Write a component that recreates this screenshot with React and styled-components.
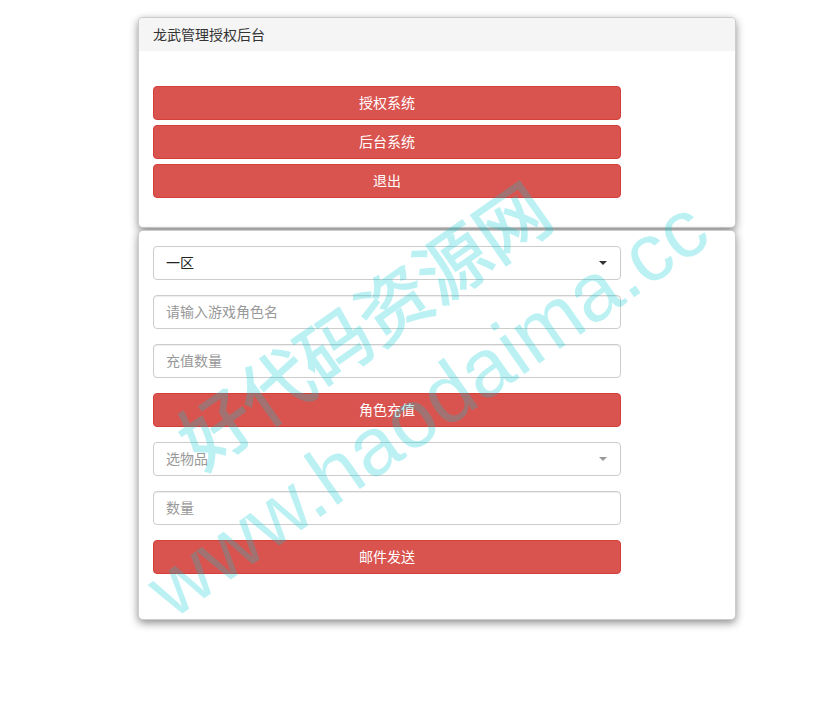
import React from 'react';
import styled, { createGlobalStyle } from 'styled-components';

const GlobalStyle = createGlobalStyle`
  html, body {
    margin: 0;
    padding: 0;
    background: #fff;
  }
  body {
    font-family: "Noto Sans CJK SC", "Liberation Sans", sans-serif;
    font-size: 14px;
    color: #333;
  }
  * {
    box-sizing: border-box;
  }
`;

const App = () => {
  return (
    <Page>
      <GlobalStyle />
      <Column>
        <Card>
          <CardHeader>龙武管理授权后台</CardHeader>
          <MenuBody>
            <Button>授权系统</Button>
            <Button>后台系统</Button>
            <Button>退出</Button>
          </MenuBody>
        </Card>

        <Card>
          <FormBody>
            <SelectWrap>
              <Select defaultValue="1">
                <option value="1">一区</option>
                <option value="2">二区</option>
              </Select>
              <Caret />
            </SelectWrap>
            <Input placeholder="请输入游戏角色名" />
            <Input placeholder="充值数量" />
            <Button>角色充值</Button>
            <SelectWrap>
              <Select defaultValue="" $placeholder>
                <option value="" disabled>选物品</option>
              </Select>
              <Caret $muted />
            </SelectWrap>
            <Input placeholder="数量" />
            <Button>邮件发送</Button>
          </FormBody>
        </Card>
      </Column>

      <Watermark>
        <MarkCn>好代码资源网</MarkCn>
        <MarkUrl>www.haodaima.cc</MarkUrl>
      </Watermark>
    </Page>
  );
};

const Page = styled.div`
  position: relative;
  width: 829px;
  height: 718px;
  padding: 17px 0 0 138px;
  overflow: hidden;
`;

const Column = styled.div`
  width: 598px;
  display: flex;
  flex-direction: column;
  gap: 2px;
`;

const Card = styled.div`
  background: #fff;
  border: 1px solid rgba(0, 0, 0, 0.2);
  border-radius: 5px;
  box-shadow: 0 3px 9px rgba(0, 0, 0, 0.45);
  overflow: hidden;
`;

const CardHeader = styled.div`
  height: 33px;
  line-height: 33px;
  padding: 0 14px;
  background: #f5f5f5;
  color: #333;
  font-size: 14px;
`;

const MenuBody = styled.div`
  padding: 35px 14px 29px;
  display: flex;
  flex-direction: column;
  gap: 5px;
`;

const FormBody = styled.div`
  padding: 15px 14px 45px;
  display: flex;
  flex-direction: column;
  gap: 15px;
`;

const Button = styled.button`
  width: 468px;
  height: 34px;
  padding: 0 0 3px;
  background: #d9534f;
  border: 1px solid #d43f3a;
  border-radius: 4px;
  color: #fff;
  font-family: "Noto Sans CJK SC", sans-serif;
  font-size: 14px;
  cursor: pointer;
`;

const Input = styled.input`
  width: 468px;
  height: 34px;
  padding: 4px 12px 7px;
  border: 1px solid #ccc;
  border-radius: 4px;
  font-family: "Noto Sans CJK SC", sans-serif;
  font-size: 14px;
  color: #555;
  outline: none;
  box-shadow: inset 0 1px 1px rgba(0, 0, 0, 0.075);

  &::placeholder {
    color: #999;
  }
`;

const SelectWrap = styled.div`
  position: relative;
  width: 468px;
`;

const Select = styled.select`
  appearance: none;
  width: 100%;
  height: 34px;
  padding: 0 12px 3px;
  border: 1px solid #ccc;
  border-radius: 4px;
  background: #fff;
  font-family: "Noto Sans CJK SC", sans-serif;
  font-size: 14px;
  color: ${(p) => (p.$placeholder ? '#999' : '#222')};
  outline: none;
`;

const Caret = styled.span`
  position: absolute;
  right: 14px;
  top: 15px;
  width: 0;
  height: 0;
  border-left: 4px solid transparent;
  border-right: 4px solid transparent;
  border-top: 4px solid ${(p) => (p.$muted ? '#999' : '#333')};
  pointer-events: none;
`;

const Watermark = styled.div`
  position: absolute;
  inset: 0;
  pointer-events: none;
  color: rgb(0, 205, 215);
  opacity: 0.26;
`;

const MarkCn = styled.span`
  position: absolute;
  left: 362px;
  top: 322px;
  transform: translate(-50%, -50%) rotate(-35deg);
  font-family: "Noto Sans CJK SC", sans-serif;
  font-size: 72px;
  font-weight: 400;
  -webkit-text-stroke: 1.6px rgb(0, 205, 215);
  line-height: 1;
  white-space: nowrap;
`;

const MarkUrl = styled.span`
  position: absolute;
  left: 427px;
  top: 408px;
  transform: translate(-50%, -50%) rotate(-35deg);
  font-family: "Liberation Sans", Arial, sans-serif;
  font-size: 82px;
  line-height: 1;
  white-space: nowrap;
`;

export default App;
